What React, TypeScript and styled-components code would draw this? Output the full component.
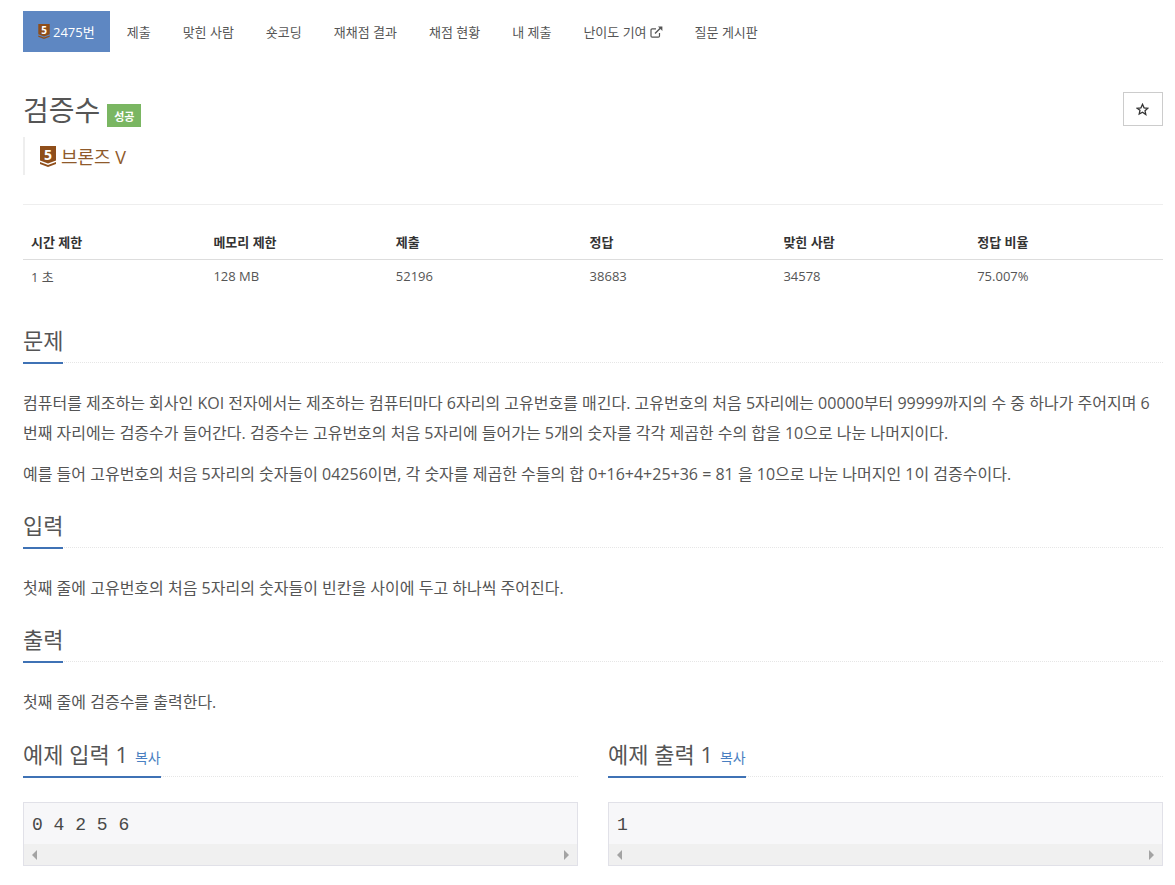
import React, { FC } from 'react';
import styled, { createGlobalStyle } from 'styled-components';

const FONT = `"Open Sans", "Noto Sans CJK KR", sans-serif`;

const GlobalStyle = createGlobalStyle`
	html, body {
		margin: 0;
		padding: 0;
		background: #fff;
	}
	body {
		font-family: ${FONT};
		font-size: 13px;
		color: #555;
	}
	* {
		box-sizing: border-box;
	}
`;

const Page = styled.div`
	width: 1175px;
	height: 885px;
	overflow: hidden;
	padding: 11px 12px 0 23px;
`;

const Nav = styled.ul`
	display: flex;
	list-style: none;
	margin: 0;
	padding: 0;
	height: 41px;
`;

const NavItem = styled.li<{ $active?: boolean }>`
	display: flex;
	align-items: center;
	gap: 3px;
	height: 41px;
	margin-right: ${({ $active }) => ($active ? '1px' : '0')};
	padding: 0 ${({ $active }) => ($active ? '15px' : '16px')};
	font-size: 13px;
	white-space: nowrap;
	color: ${({ $active }) => ($active ? '#fff' : '#555')};
	background: ${({ $active }) => ($active ? '#5e87c2' : 'transparent')};
`;

const TitleRow = styled.div`
	display: flex;
	justify-content: space-between;
	align-items: flex-start;
	margin-top: 40px;
`;

const TitleLeft = styled.div`
	display: flex;
	align-items: flex-start;
	gap: 7px;
	height: 36px;
`;

const Title = styled.h1`
	margin: 0;
	font-size: 28px;
	font-weight: 400;
	line-height: 36px;
	color: #555;
`;

const ResultLabel = styled.span`
	display: flex;
	align-items: center;
	justify-content: center;
	width: 34px;
	height: 23px;
	margin-top: 12px;
	background: #7ab662;
	color: #fff;
	font-size: 11px;
	font-weight: 700;
`;

const StarButton = styled.button`
	display: flex;
	align-items: center;
	justify-content: center;
	width: 40px;
	height: 34px;
	padding: 0 1px 0 0;
	background: #fff;
	border: 1px solid #ccc;
	color: #333;
`;

const TierQuote = styled.div`
	display: flex;
	align-items: center;
	gap: 5px;
	height: 38px;
	margin-top: 9px;
	padding-left: 15px;
	border-left: 2px solid #eee;
	color: #8f5a2b;
	font-size: 18px;
	line-height: 21px;
`;

const TierName = styled.span`
	margin-top: 2px;
`;

const Rule = styled.hr`
	margin: 29px 0 20px;
	border: 0;
	border-top: 1px solid #eee;
`;

const InfoTable = styled.table`
	width: 100%;
	table-layout: fixed;
	border-collapse: collapse;
	font-size: 13px;
`;

const HeadCell = styled.th<{ $width: string }>`
	width: ${({ $width }) => $width};
	height: 34px;
	padding: 0 8px;
	text-align: left;
	font-weight: 700;
	color: #333;
	border-bottom: 1px solid #ddd;
`;

const BodyCell = styled.td`
	height: 36px;
	padding: 0 8px 2px;
	color: #555;
`;

const Headline = styled.div<{ $marginTop: number }>`
	margin-top: ${({ $marginTop }) => $marginTop}px;
	height: 41px;
	border-bottom: 1px dotted #e6e6e6;
`;

const HeadlineText = styled.div`
	display: inline-flex;
	align-items: baseline;
	gap: 7px;
	height: 42px;
	padding-top: 3px;
	border-bottom: 2px solid #3f72b5;
	font-size: 22px;
	line-height: 30px;
	color: #555;
	white-space: nowrap;
`;

const CopyLink = styled.a`
	font-size: 14px;
	color: #4a7fc1;
`;

const Paragraph = styled.p<{ $first?: boolean }>`
	margin: ${({ $first }) => ($first ? '25px' : '11px')} 0 0;
	font-size: 16px;
	line-height: 30px;
	color: #555;
`;

const SampleGrid = styled.div`
	display: grid;
	grid-template-columns: 555px 555px;
	column-gap: 30px;
	margin-top: 19px;
`;

const SampleBox = styled.div`
	margin-top: 25px;
	height: 64px;
	background: #f7f7f9;
	border: 1px solid #e1e1e8;
`;

const SampleText = styled.pre`
	margin: 0;
	height: 41px;
	padding: 12px 8px 0;
	font-family: "Liberation Mono", monospace;
	font-size: 18px;
	line-height: 20px;
	color: #484848;
`;

const FakeScrollbar = styled.div`
	display: flex;
	align-items: center;
	justify-content: space-between;
	height: 21px;
	padding: 0 8px;
	background: #f0f0f0;
`;

const Arrow = styled.span<{ $dir: 'left' | 'right' }>`
	width: 0;
	height: 0;
	border-top: 5px solid transparent;
	border-bottom: 5px solid transparent;
	border-${({ $dir }) => ($dir === 'left' ? 'right' : 'left')}: 5px solid #a3a3a3;
`;

const BronzeBadge: FC<{ width: number; height: number; fontSize: number }> = ({ width, height, fontSize }) => (
	<svg width={width} height={height} viewBox="0 0 16 21">
		<path d="M0 0h16v14.5l-8 3-8-3z" fill="#8f4e1a" />
		<path d="M0 16l8 3 8-3v2l-8 3-8-3z" fill="#8f4e1a" />
		<text x="8" y="13.5" textAnchor="middle" fontSize={fontSize} fontWeight="700" fill="#fff" fontFamily="Open Sans, sans-serif">5</text>
	</svg>
);

const StarIcon = () => (
	<svg width="13" height="13" viewBox="0 0 24 24" fill="none" stroke="#333" strokeWidth="2.4" strokeLinejoin="miter">
		<path d="M12 2.5l2.9 6.4 7 .8-5.2 4.7 1.4 6.9L12 17l-6.1 3.3 1.4-6.9L2.1 9.7l7-.8z" />
	</svg>
);

const ExternalIcon = () => (
	<svg width="13" height="12" viewBox="0 0 13 12" fill="none" stroke="#555" strokeWidth="1.2">
		<path d="M9.5 7v3a1.2 1.2 0 0 1-1.2 1.2H2.2A1.2 1.2 0 0 1 1 10V4a1.2 1.2 0 0 1 1.2-1.2H6" />
		<path d="M5 7.5L11 1.5" strokeWidth="1.5" />
		<path d="M8 .6h4.4V5z" fill="#555" stroke="none" />
	</svg>
);

const columns = [
	{ label: '시간 제한', value: '1 초', width: '16%' },
	{ label: '메모리 제한', value: '128 MB', width: '16%' },
	{ label: '제출', value: '52196', width: '17%' },
	{ label: '정답', value: '38683', width: '17%' },
	{ label: '맞힌 사람', value: '34578', width: '17%' },
	{ label: '정답 비율', value: '75.007%', width: '17%' },
];

const navLabels = ['제출', '맞힌 사람', '숏코딩', '재채점 결과', '채점 현황', '내 제출'];

const Sample: FC<{ title: string; text: string }> = ({ title, text }) => (
	<div>
		<Headline $marginTop={0}>
			<HeadlineText>
				{title}
				<CopyLink>복사</CopyLink>
			</HeadlineText>
		</Headline>
		<SampleBox>
			<SampleText>{text}</SampleText>
			<FakeScrollbar>
				<Arrow $dir="left" />
				<Arrow $dir="right" />
			</FakeScrollbar>
		</SampleBox>
	</div>
);

const App: FC = () => (
	<Page>
		<GlobalStyle />
		<Nav>
			<NavItem $active>
				<BronzeBadge width={12} height={15} fontSize={14} />
				2475번
			</NavItem>
			{navLabels.map((label) => (
				<NavItem key={label}>{label}</NavItem>
			))}
			<NavItem>
				난이도 기여
				<ExternalIcon />
			</NavItem>
			<NavItem>질문 게시판</NavItem>
		</Nav>

		<TitleRow>
			<TitleLeft>
				<Title>검증수</Title>
				<ResultLabel>성공</ResultLabel>
			</TitleLeft>
			<StarButton>
				<StarIcon />
			</StarButton>
		</TitleRow>
		<TierQuote>
			<BronzeBadge width={16} height={21} fontSize={14} />
			<TierName>브론즈 V</TierName>
		</TierQuote>

		<Rule />

		<InfoTable>
			<thead>
				<tr>
					{columns.map((c) => (
						<HeadCell key={c.label} $width={c.width}>{c.label}</HeadCell>
					))}
				</tr>
			</thead>
			<tbody>
				<tr>
					{columns.map((c) => (
						<BodyCell key={c.label}>{c.value}</BodyCell>
					))}
				</tr>
			</tbody>
		</InfoTable>

		<Headline $marginTop={27}>
			<HeadlineText>문제</HeadlineText>
		</Headline>
		<Paragraph $first>
			컴퓨터를 제조하는 회사인 KOI 전자에서는 제조하는 컴퓨터마다 6자리의 고유번호를 매긴다. 고유번호의 처음 5자리에는 00000부터 99999까지의 수 중 하나가 주어지며 6번째 자리에는 검증수가 들어간다. 검증수는 고유번호의 처음 5자리에 들어가는 5개의 숫자를 각각 제곱한 수의 합을 10으로 나눈 나머지이다.
		</Paragraph>
		<Paragraph>
			예를 들어 고유번호의 처음 5자리의 숫자들이 04256이면, 각 숫자를 제곱한 수들의 합 0+16+4+25+36 = 81 을 10으로 나눈 나머지인 1이 검증수이다.
		</Paragraph>

		<Headline $marginTop={18}>
			<HeadlineText>입력</HeadlineText>
		</Headline>
		<Paragraph $first>첫째 줄에 고유번호의 처음 5자리의 숫자들이 빈칸을 사이에 두고 하나씩 주어진다.</Paragraph>

		<Headline $marginTop={18}>
			<HeadlineText>출력</HeadlineText>
		</Headline>
		<Paragraph $first>첫째 줄에 검증수를 출력한다.</Paragraph>

		<SampleGrid>
			<Sample title="예제 입력 1" text="0 4 2 5 6" />
			<Sample title="예제 출력 1" text="1" />
		</SampleGrid>
	</Page>
);

export default App;
